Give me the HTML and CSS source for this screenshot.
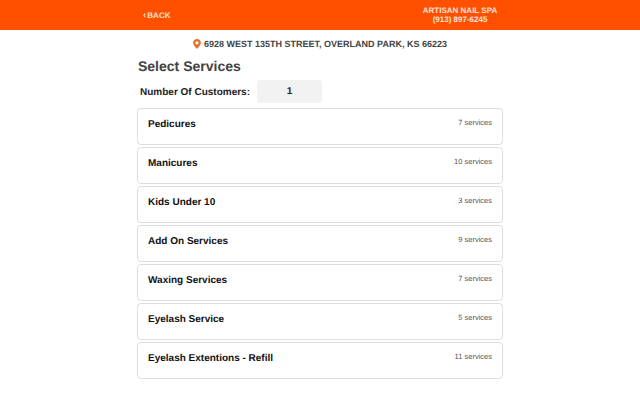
FILE: index.html
```html
<!DOCTYPE html>
<html>
<head>
<meta charset="utf-8">
<title>Select Services</title>
<link rel="stylesheet" href="styles.css">
</head>
<body>
<header class="topbar">
	<div class="topbar-inner">
		<a class="back"><span class="chev">‹</span>BACK</a>
		<div class="shop">
			<div>ARTISAN NAIL SPA</div>
			<div>(913) 897-6245</div>
		</div>
	</div>
</header>
<main class="content">
	<div class="address">
		<svg class="pin" viewBox="0 0 10 13" width="8" height="10"><path fill="#e8702a" fill-rule="evenodd" d="M5 0C2.2 0 0 2.2 0 4.9 0 8.2 5 13 5 13s5-4.8 5-8.1C10 2.2 7.8 0 5 0zm0 3a2 2 0 1 1 0 4 2 2 0 0 1 0-4z"/></svg>
		<span>6928 WEST 135TH STREET, OVERLAND PARK, KS 66223</span>
	</div>
	<h1 class="title">Select Services</h1>
	<div class="customers">
		<span class="customers-label">Number Of Customers:</span>
		<span class="customers-value">1</span>
	</div>
	<div class="list">
		<div class="card"><span class="card-name">Pedicures</span><span class="card-count">7 services</span></div>
		<div class="card"><span class="card-name">Manicures</span><span class="card-count">10 services</span></div>
		<div class="card"><span class="card-name">Kids Under 10</span><span class="card-count">3 services</span></div>
		<div class="card"><span class="card-name">Add On Services</span><span class="card-count">9 services</span></div>
		<div class="card"><span class="card-name">Waxing Services</span><span class="card-count">7 services</span></div>
		<div class="card"><span class="card-name">Eyelash Service</span><span class="card-count">5 services</span></div>
		<div class="card"><span class="card-name">Eyelash Extentions - Refill</span><span class="card-count">11 services</span></div>
	</div>
</main>
</body>
</html>
```
FILE: styles.css
```css
body {
	margin: 0;
	background: #fff;
	font-family: "Liberation Sans", Arial, sans-serif;
	color: #333;
	text-rendering: geometricPrecision;
}

.topbar {
	height: 30px;
	background: #ff5000;
	color: #fff;
}
.topbar-inner {
	width: 366px;
	height: 30px;
	margin: 0 auto;
	display: flex;
	justify-content: space-between;
	align-items: center;
}
.back {
	margin-left: 6px;
	font-size: 8px;
	font-weight: bold;
	color: #fbe3d6;
}
.chev {
	margin-right: 1px;
	font-size: 10px;
}
.shop {
	width: 76px;
	margin-right: 5px;
	font-size: 8px;
	font-weight: bold;
	line-height: 9.5px;
	text-align: center;
	color: #fbe3d6;
}

.content {
	width: 366px;
	margin: 0 auto;
}
.address {
	box-sizing: border-box;
	height: 29px;
	padding-bottom: 2px;
	display: flex;
	justify-content: center;
	align-items: center;
	gap: 3px;
	font-size: 9px;
	font-weight: bold;
	color: #444;
}
.title {
	margin: 0 0 0 1px;
	height: 20px;
	font-size: 14px;
	line-height: 14px;
	font-weight: bold;
	color: #444;
}
.customers {
	margin-top: 1px;
	display: flex;
	align-items: center;
	padding-left: 3px;
}
.customers-label {
	width: 117px;
	padding-top: 1px;
	font-size: 10px;
	font-weight: bold;
	white-space: nowrap;
	color: #222;
}
.customers-value {
	width: 65px;
	height: 23px;
	line-height: 24px;
	background: #f2f2f2;
	border-radius: 3px;
	text-align: center;
	font-size: 10px;
	font-weight: bold;
	color: #222;
}

.list {
	margin-top: 5px;
	display: flex;
	flex-direction: column;
	gap: 2px;
}
.card {
	box-sizing: border-box;
	height: 37px;
	padding: 9px 10px 0;
	border: 1px solid #ddd;
	border-radius: 4px;
	display: flex;
	justify-content: space-between;
	align-items: flex-start;
}
.card-name {
	font-size: 10px;
	line-height: 14px;
	font-weight: bold;
	color: #111;
}
.card-count {
	font-size: 7.5px;
	line-height: 10px;
	color: #555;
}
```
